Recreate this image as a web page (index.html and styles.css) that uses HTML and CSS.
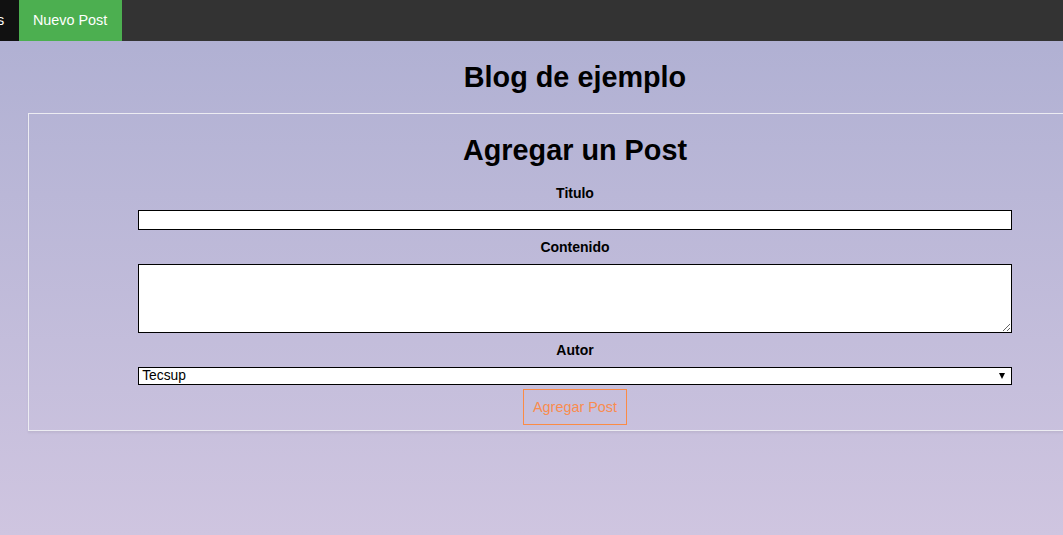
FILE: index.html
```html
<!DOCTYPE html>
<html lang="es">
<head>
<meta charset="utf-8">
<title>Blog de ejemplo</title>
<link rel="stylesheet" href="styles.css">
</head>
<body>
<nav class="topnav">
  <ul class="nav-list">
    <li><a class="nav-link nav-link-dark" href="#">Posts</a></li>
    <li><a class="nav-link nav-link-active" href="#">Nuevo Post</a></li>
  </ul>
</nav>
<div class="page">
  <h1 class="site-title">Blog de ejemplo</h1>
  <section class="card">
    <h2 class="card-title">Agregar un Post</h2>
    <form class="post-form">
      <label class="field-label" for="titulo">Titulo</label>
      <input class="field field-input" id="titulo" type="text">
      <label class="field-label" for="contenido">Contenido</label>
      <textarea class="field field-textarea" id="contenido"></textarea>
      <label class="field-label" for="autor">Autor</label>
      <div class="select-wrap">
        <select class="field field-select" id="autor">
          <option>Tecsup</option>
        </select>
      </div>
      <button class="submit-btn" type="button">Agregar Post</button>
    </form>
  </section>
</div>
</body>
</html>
```
FILE: styles.css
```css
html {
  height: 100%;
  background: linear-gradient(to bottom, #aeafd2 0%, #cfc5e0 100%);
}
body {
  margin: 0;
  min-height: 100%;
  overflow: hidden;
  font-family: "Liberation Sans", Arial, sans-serif;
  color: #000;
}
.topnav {
  background: #333;
  height: 41px;
}
.nav-list {
  list-style: none;
  margin: 0 0 0 -46px;
  padding: 0;
  display: flex;
}
.nav-link {
  display: block;
  color: #fff;
  text-decoration: none;
  font-size: 14.4px;
  line-height: 17px;
  padding: 12px 14.3px;
}
.nav-link-dark {
  background: #111;
}
.nav-link-active {
  background: #4caf50;
}
.page {
  width: 1150px;
}
.site-title {
  margin: 20px 0 20px;
  font-size: 28.8px;
  line-height: 32px;
  text-align: center;
  font-weight: bold;
}
.card {
  margin: 0 28px;
  border: 1px solid #ececf2;
  box-shadow: 0 2px 2px rgba(0, 0, 0, 0.06);
  padding: 0 0 5px;
}
.card-title {
  margin: 20px 0 19px;
  font-size: 28.8px;
  line-height: 32px;
  text-align: center;
  font-weight: bold;
}
.post-form {
  display: flex;
  flex-direction: column;
  align-items: center;
}
.field-label {
  display: block;
  font-size: 14px;
  font-weight: bold;
  line-height: 16px;
  margin-bottom: 9px;
}
.field {
  box-sizing: border-box;
  width: 80%;
  border: 1px solid #000;
  border-radius: 0;
  background: #fff;
  margin: 0 0 9px;
  font-family: "Liberation Sans", Arial, sans-serif;
  font-size: 13.33px;
  color: #000;
}
.field-input {
  height: 20px;
  padding: 1px 2px;
}
.field-textarea {
  display: block;
  height: 69px;
  padding: 2px;
}
.select-wrap {
  position: relative;
  width: 80%;
  margin: 0 0 4px;
}
.field-select {
  display: block;
  width: 100%;
  height: 18px;
  margin: 0;
  padding: 0 0 0 3px;
  appearance: none;
  -webkit-appearance: none;
  font-size: 13.8px;
  line-height: 16px;
}
.select-wrap::after {
  content: "";
  position: absolute;
  right: 7px;
  top: 6px;
  border-left: 3px solid transparent;
  border-right: 3px solid transparent;
  border-top: 6px solid #000;
  pointer-events: none;
}
.submit-btn {
  box-sizing: border-box;
  height: 36px;
  padding: 0 9px;
  background: transparent;
  border: 1px solid #fb8b45;
  color: #f98c4f;
  font-family: "Liberation Sans", Arial, sans-serif;
  font-size: 14.4px;
}
```
